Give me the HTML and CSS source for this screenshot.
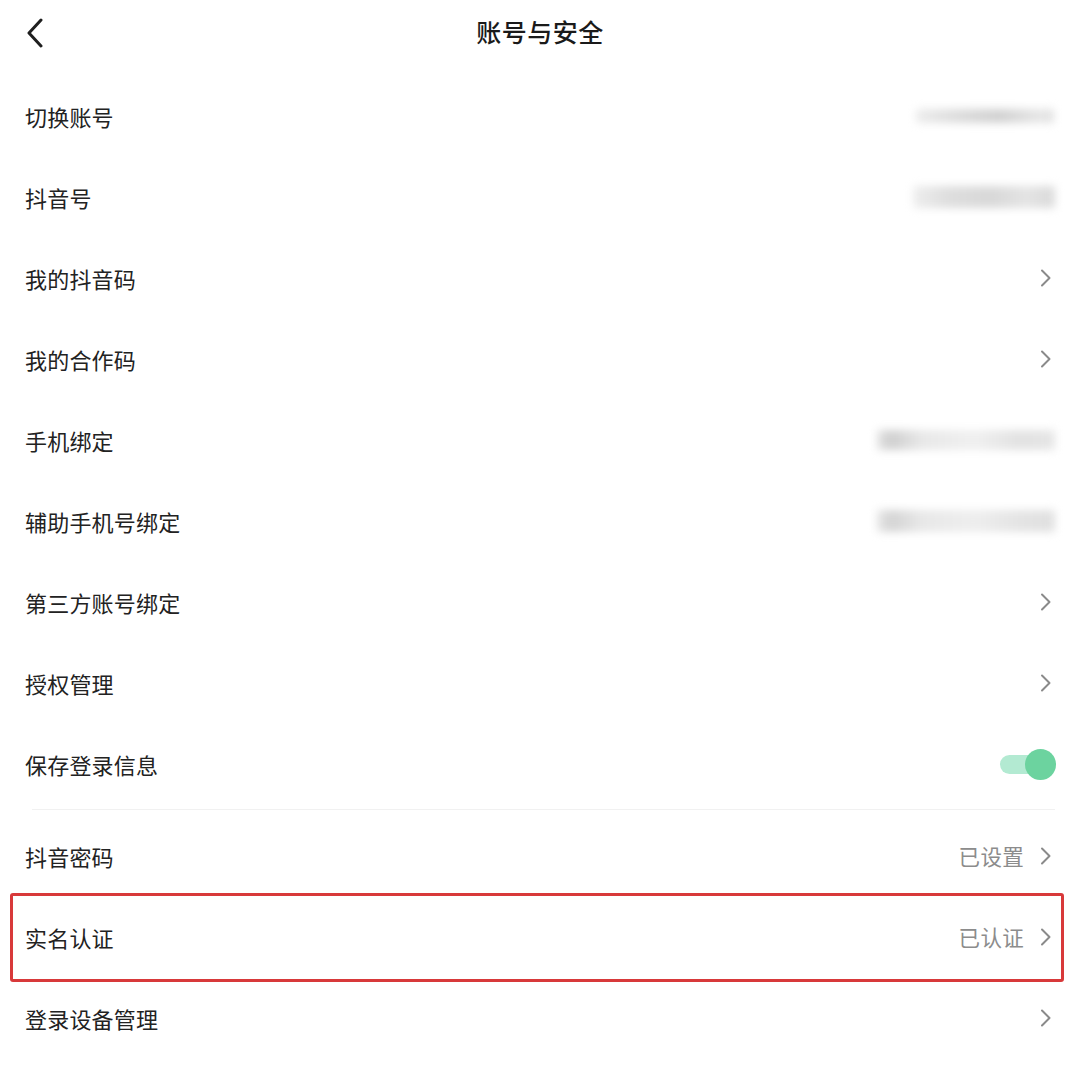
FILE: index.html
```html
<!DOCTYPE html>
<html lang="zh-CN">
<head>
<meta charset="utf-8">
<title>账号与安全</title>
<link rel="stylesheet" href="styles.css">
</head>
<body>
<div class="page">
  <header class="topbar">
    <span class="back">
      <svg width="20" height="30" viewBox="0 0 20 30"><path d="M16 2 L4 15 L16 28" fill="none" stroke="#1f1f1f" stroke-width="3" stroke-linecap="round" stroke-linejoin="round"/></svg>
    </span>
    <h1 class="title">账号与安全</h1>
  </header>

  <ul class="list">
    <li class="row"><span class="label">切换账号</span><span class="blur b1"></span></li>
    <li class="row"><span class="label">抖音号</span><span class="blur b2"></span></li>
    <li class="row"><span class="label">我的抖音码</span><span class="chev"><svg width="12" height="18" viewBox="0 0 12 18"><path d="M2 1.5 L9.5 9 L2 16.5" fill="none" stroke="#8a8a8a" stroke-width="2" stroke-linecap="round" stroke-linejoin="round"/></svg></span></li>
    <li class="row"><span class="label">我的合作码</span><span class="chev"><svg width="12" height="18" viewBox="0 0 12 18"><path d="M2 1.5 L9.5 9 L2 16.5" fill="none" stroke="#8a8a8a" stroke-width="2" stroke-linecap="round" stroke-linejoin="round"/></svg></span></li>
    <li class="row"><span class="label">手机绑定</span><span class="blur b3"></span></li>
    <li class="row"><span class="label">辅助手机号绑定</span><span class="blur b4"></span></li>
    <li class="row"><span class="label">第三方账号绑定</span><span class="chev"><svg width="12" height="18" viewBox="0 0 12 18"><path d="M2 1.5 L9.5 9 L2 16.5" fill="none" stroke="#8a8a8a" stroke-width="2" stroke-linecap="round" stroke-linejoin="round"/></svg></span></li>
    <li class="row"><span class="label">授权管理</span><span class="chev"><svg width="12" height="18" viewBox="0 0 12 18"><path d="M2 1.5 L9.5 9 L2 16.5" fill="none" stroke="#8a8a8a" stroke-width="2" stroke-linecap="round" stroke-linejoin="round"/></svg></span></li>
    <li class="row"><span class="label">保存登录信息</span><span class="toggle"><span class="track"></span><span class="knob"></span></span></li>
  </ul>

  <div class="divider"></div>

  <ul class="list">
    <li class="row"><span class="label">抖音密码</span><span class="right"><span class="value">已设置</span><span class="chev"><svg width="12" height="18" viewBox="0 0 12 18"><path d="M2 1.5 L9.5 9 L2 16.5" fill="none" stroke="#8a8a8a" stroke-width="2" stroke-linecap="round" stroke-linejoin="round"/></svg></span></span></li>
    <li class="row highlighted"><span class="label">实名认证</span><span class="right"><span class="value">已认证</span><span class="chev"><svg width="12" height="18" viewBox="0 0 12 18"><path d="M2 1.5 L9.5 9 L2 16.5" fill="none" stroke="#8a8a8a" stroke-width="2" stroke-linecap="round" stroke-linejoin="round"/></svg></span></span><span class="redbox"></span></li>
    <li class="row"><span class="label">登录设备管理</span><span class="chev"><svg width="12" height="18" viewBox="0 0 12 18"><path d="M2 1.5 L9.5 9 L2 16.5" fill="none" stroke="#8a8a8a" stroke-width="2" stroke-linecap="round" stroke-linejoin="round"/></svg></span></li>
  </ul>
</div>
</body>
</html>
```

FILE: styles.css
```css
* { box-sizing: border-box; }
html, body {
  margin: 0;
  padding: 0;
  background: #ffffff;
}
body {
  font-family: "Noto Sans CJK SC", "Noto Sans", sans-serif;
  color: #1f1f1f;
}
.page {
  width: 1080px;
  height: 1073px;
  overflow: hidden;
  background: #fff;
}
.topbar {
  height: 64px;
  padding-bottom: 2px;
  margin-bottom: 11px;
  display: flex;
  align-items: center;
  justify-content: center;
  position: relative;
}
.back {
  position: absolute;
  left: 25px;
  top: 18px;
  width: 20px;
  height: 30px;
  display: block;
}
.back svg { display: block; }
.title {
  margin: 0;
  font-size: 25px;
  font-weight: 500;
  letter-spacing: 0.5px;
  color: #1a1a1a;
}
.list {
  list-style: none;
  margin: 0;
  padding: 0;
}
.row {
  height: 81px;
  padding: 0 25px 0 25px;
  display: flex;
  align-items: center;
  justify-content: space-between;
  position: relative;
}
.label {
  font-size: 22px;
  color: #222;
  letter-spacing: 0.2px;
}
.right {
  display: flex;
  align-items: center;
  gap: 16px;
}
.value {
  font-size: 21.5px;
  color: #8c8c8c;
  letter-spacing: 0.3px;
}
.chev {
  width: 12px;
  height: 18px;
  display: block;
  margin-right: 3px;
}
.chev svg { display: block; }
.blur {
  display: block;
  background: #dcdcdc;
  filter: blur(4px);
  border-radius: 2px;
}
.b1 { width: 138px; height: 14px; margin-right: 1px; background: linear-gradient(90deg, #ececec 0%, #dcdcdc 30%, #d0d0d0 60%, #e6e6e6 90%, #e0e0e0 100%); }
.b2 { width: 142px; height: 22px; background: linear-gradient(90deg, #eeeeee 0%, #dedede 25%, #d8d8d8 55%, #e4e4e4 80%, #dadada 100%); }
.b3 { width: 178px; height: 20px; background: linear-gradient(90deg, #e4e4e4 0%, #cfcfcf 8%, #e8e8e8 25%, #f0f0f0 55%, #e2e2e2 80%, #e6e6e6 100%); }
.b4 { width: 178px; height: 22px; background: linear-gradient(90deg, #e6e6e6 0%, #d4d4d4 8%, #e8e8e8 25%, #eeeeee 55%, #e4e4e4 80%, #e0e0e0 100%); }
.toggle {
  position: relative;
  width: 56px;
  height: 32px;
  display: block;
  margin-right: -1px;
}
.track {
  position: absolute;
  left: 0;
  top: 7px;
  width: 48px;
  height: 19px;
  border-radius: 10px;
  background: #b3ead2;
}
.knob {
  position: absolute;
  right: 0;
  top: 1px;
  width: 31px;
  height: 31px;
  border-radius: 50%;
  background: #6cd39f;
}
.divider {
  height: 1px;
  margin: 5px 25px 5px 32px;
  background: #f1f1f1;
}
.redbox {
  position: absolute;
  left: 10px;
  right: 16px;
  top: -3px;
  bottom: -5px;
  border: 3px solid #d8393a;
  border-radius: 3px;
  pointer-events: none;
}
```
